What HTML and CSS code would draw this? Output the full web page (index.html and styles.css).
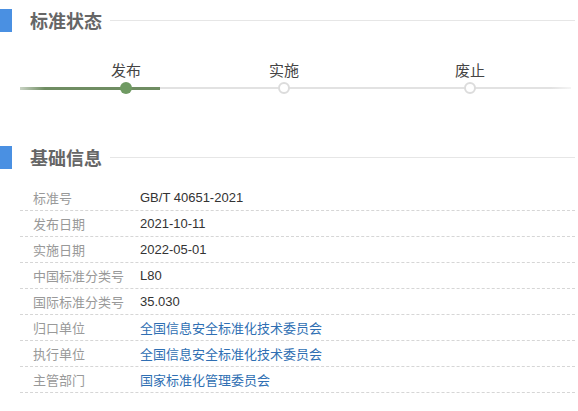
FILE: index.html
```html
<!DOCTYPE html>
<html lang="zh-CN">
<head>
<meta charset="utf-8">
<link rel="stylesheet" href="styles.css">
</head>
<body>
<div class="page">
  <div class="sec-head first">
    <span class="bar"></span>
    <h2 class="title">标准状态</h2>
    <span class="rule"></span>
  </div>

  <div class="timeline">
    <div class="track"><span class="done"></span></div>
    <div class="step s1 active">
      <span class="label">发布</span>
      <span class="dot"></span>
    </div>
    <div class="step s2">
      <span class="label">实施</span>
      <span class="dot"></span>
    </div>
    <div class="step s3">
      <span class="label">废止</span>
      <span class="dot"></span>
    </div>
  </div>

  <div class="sec-head second">
    <span class="bar"></span>
    <h2 class="title">基础信息</h2>
    <span class="rule"></span>
  </div>

  <div class="info">
    <div class="row"><span class="k">标准号</span><span class="v">GB/T 40651-2021</span></div>
    <div class="row"><span class="k">发布日期</span><span class="v">2021-10-11</span></div>
    <div class="row"><span class="k">实施日期</span><span class="v">2022-05-01</span></div>
    <div class="row"><span class="k">中国标准分类号</span><span class="v">L80</span></div>
    <div class="row"><span class="k">国际标准分类号</span><span class="v">35.030</span></div>
    <div class="row"><span class="k">归口单位</span><a class="v link" href="#">全国信息安全标准化技术委员会</a></div>
    <div class="row"><span class="k">执行单位</span><a class="v link" href="#">全国信息安全标准化技术委员会</a></div>
    <div class="row"><span class="k">主管部门</span><a class="v link" href="#">国家标准化管理委员会</a></div>
  </div>
</div>
</body>
</html>
```

FILE: styles.css
```css
html, body {
  margin: 0;
  padding: 0;
  background: #fff;
}
body {
  font-family: "Noto Sans CJK SC", "Liberation Sans", sans-serif;
  color: #333;
}
.page {
  padding: 0 3px 0 0;
}
.sec-head {
  display: flex;
  align-items: center;
  height: 23px;
}
.sec-head.first { margin-top: 9px; }
.sec-head.second { margin-top: 52px; }
.bar {
  width: 12px;
  height: 23px;
  background: #4a90e2;
  flex: none;
}
.title {
  margin: 0 0 0 18px;
  font-size: 18px;
  line-height: 23px;
  font-weight: bold;
  color: #666;
  letter-spacing: 0;
}
.rule {
  flex: 1;
  height: 1px;
  background: #e6e6e6;
  margin-left: 8px;
}

.timeline {
  position: relative;
  margin: 28px 4px 0 20px;
  display: grid;
  grid-template-columns: 86px 40px 118px 40px 146px 40px;
}
.track {
  position: absolute;
  left: 0;
  right: 0;
  top: 27px;
  height: 2px;
  background: linear-gradient(to right, #f3f3f3 0, #e2e2e2 20px, #e2e2e2 calc(100% - 20px), #f5f5f5 100%);
}
.done {
  position: absolute;
  left: 0;
  top: -0.5px;
  width: 140px;
  height: 3px;
  background: linear-gradient(to right, #c9d3c4 0, #6f8d62 25px, #6f8d62 100%);
}
.step {
  display: flex;
  flex-direction: column;
  align-items: center;
  position: relative;
}
.s1 { grid-column: 2; }
.s2 { grid-column: 4; }
.s3 { grid-column: 6; }
.label {
  font-size: 15px;
  line-height: 20px;
  color: #444;
  white-space: nowrap;
}
.dot {
  margin-top: 2px;
  width: 8px;
  height: 8px;
  border: 2px solid #dcdcdc;
  background: #fff;
  border-radius: 50%;
}
.active .dot {
  margin-top: 2px;
  width: 12px;
  height: 12px;
  border: none;
  background: #6f9a62;
}

.info {
  margin: 16px 0 0 20px;
}
.row {
  display: flex;
  align-items: center;
  height: 25px;
  border-bottom: 1px dashed #d6d6d6;
  font-size: 13px;
}
.k {
  width: 120px;
  padding-left: 13px;
  box-sizing: border-box;
  color: #999;
  flex: none;
}
.v {
  font-family: "Liberation Sans", "Noto Sans CJK SC", sans-serif;
  color: #333;
}
.link {
  font-family: "Noto Sans CJK SC", sans-serif;
  color: #2f6fb3;
  text-decoration: none;
}
```
